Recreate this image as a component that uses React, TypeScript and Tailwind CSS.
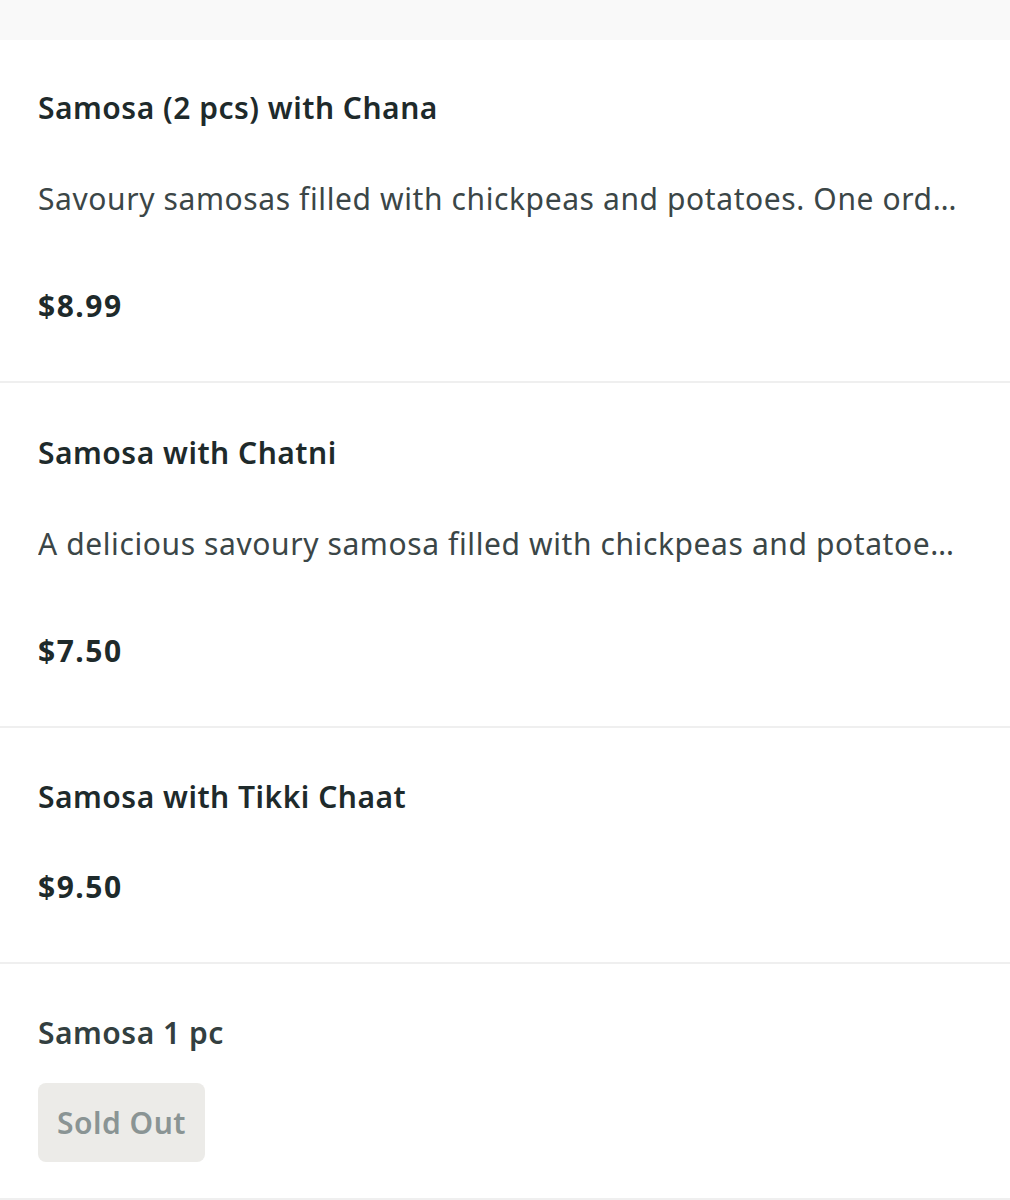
import React from "react";

const font = { fontFamily: '"Noto Sans", "Open Sans", sans-serif' };

export default function App() {
  return (
    <div className="w-[1010px] min-h-[1200px] bg-white" style={font}>
      <div className="h-[40px] bg-[#f9f9f9]" />

      <div className="px-[38px] pt-[50px] pb-[57px] border-b-2 border-[#efefef]">
        <div className="text-[30px] leading-[36px] font-semibold tracking-[0.5px] text-[#1e2a2b]">Samosa (2 pcs) with Chana</div>
        <div className="mt-[53px] pr-[6px] text-[30px] leading-[40px] tracking-[0.6px] text-[#3b4647] truncate">
          Savoury samosas filled with chickpeas and potatoes. One order comes with two samosas.
        </div>
        <div className="mt-[69px] text-[30px] leading-[36px] font-bold tracking-[1.5px] text-[#1e2a2b]">$8.99</div>
      </div>

      <div className="px-[38px] pt-[52px] pb-[57px] border-b-2 border-[#efefef]">
        <div className="text-[30px] leading-[36px] font-semibold tracking-[0.5px] text-[#1e2a2b]">Samosa with Chatni</div>
        <div className="mt-[53px] pr-[6px] text-[30px] leading-[40px] tracking-[0.6px] text-[#3b4647] truncate">
          A delicious savoury samosa filled with chickpeas and potatoes, served with chatni.
        </div>
        <div className="mt-[69px] text-[30px] leading-[36px] font-bold tracking-[1.5px] text-[#1e2a2b]">$7.50</div>
      </div>

      <div className="px-[38px] pt-[51px] pb-[57px] border-b-2 border-[#efefef]">
        <div className="text-[30px] leading-[36px] font-semibold tracking-[0.5px] text-[#1e2a2b]">Samosa with Tikki Chaat</div>
        <div className="mt-[54px] text-[30px] leading-[36px] font-bold tracking-[1.5px] text-[#1e2a2b]">$9.50</div>
      </div>

      <div className="px-[38px] pt-[51px] pb-[36px] border-b-2 border-[#efefef]">
        <div className="text-[30px] leading-[36px] font-semibold tracking-[0.5px] text-[#333f40]">Samosa 1 pc</div>
        <div className="mt-[32px] flex">
          <div className="w-[167px] h-[79px] rounded-[8px] bg-[#ecebe8] flex items-center justify-center text-[30px] font-semibold tracking-[0.5px] text-[#8a9494]">
            Sold Out
          </div>
        </div>
      </div>
    </div>
  );
}
